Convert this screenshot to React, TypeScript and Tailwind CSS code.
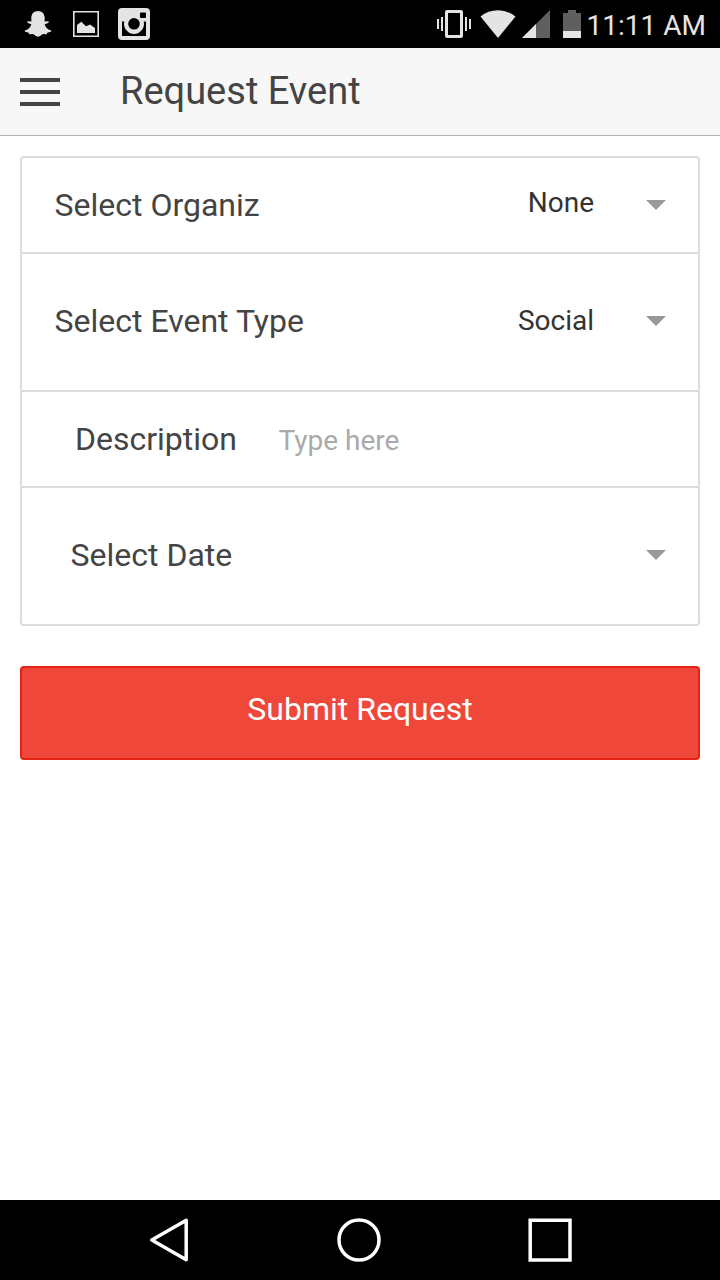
import React from "react";

const StatusBar: React.FC = () => (
  <div className="flex h-12 items-center justify-between bg-black text-[#e4e4e4]">
    <div className="flex items-center">
      <svg className="h-12 w-[150px]" viewBox="0 0 150 48" fill="currentColor">
        <path d="M38 11c4 0 6.500 2.800 6.700 6.600l-.1 4 3.400-.4c1 .3 1 1.300.1 1.700l-3.400 1.300c.6 3 2.500 5.100 6.400 6.400l.2.900-4 1.200-.6 1.500-3.800-.1c-1.500.6-2.700 2.700-4.900 2.700s-3.400-2.100-4.900-2.700l-3.800.1-.6-1.500-4-1.200.2-.9c3.900-1.300 5.800-3.400 6.400-6.400l-3.400-1.300c-.9-.4-.9-1.400.1-1.700l3.400.4-.1-4C31.500 13.800 34 11 38 11z" />
        <path
          d="M73 11h26v26H73V11zm1.600 1.600v22.800h22.800V12.600H74.600z"
          fillRule="evenodd"
        />
        <path d="M77 33v-8l4.300-3.200 4.700 4.400 4-1.800 5 3.600v5z" />
        <path
          d="M122 8h24a4 4 0 0 1 4 4v24a4 4 0 0 1-4 4h-24a4 4 0 0 1-4-4V12a4 4 0 0 1 4-4zm19 4.500a1 1 0 0 0-1 1v3.500a1 1 0 0 0 1 1h4a1 1 0 0 0 1-1v-3.500a1 1 0 0 0-1-1zM122 21.500V36h24V21.500h-2.300a10 10 0 1 1-19.400 0zM134 18a5.800 5.800 0 1 0 0 11.600a5.800 5.800 0 0 0 0-11.600z"
          fillRule="evenodd"
        />
      </svg>
    </div>
    <div className="flex items-center pr-[14px]">
      <svg className="h-12 w-[151px]" viewBox="436 0 151 48" fill="currentColor">
        {/* vibrate */}
        <path d="M437 19h2v10h-2zM441 17h2v14h-2zM465 17h2v14h-2zM469 19h2v10h-2z" />
        <path
          d="M447 10h14a2 2 0 0 1 2 2v24a2 2 0 0 1-2 2h-14a2 2 0 0 1-2-2V12a2 2 0 0 1 2-2zm1 3v22h12V13z"
          fillRule="evenodd"
        />
        {/* wifi */}
        <path d="M480.500 16.500Q488 10.200 498 10.200T515.500 16.500L498 38z" />
        {/* signal */}
        <path d="M550 10v28h-28z" fill="#5f5f5f" />
        <path d="M536 24v14h-14z" />
        {/* battery */}
        <path d="M568 10h8v3h5v18h-18V13h5z" fill="#5f5f5f" />
        <path d="M563 31h18v7h-18z" />
      </svg>
      <span className="pt-[3px] text-[28px] leading-8">11:11 AM</span>
    </div>
  </div>
);

const Header: React.FC = () => (
  <header className="flex h-[88px] items-center border-b border-[#b2b2b2] bg-[#f7f7f7] pl-5">
    <button className="mt-px flex w-10 flex-col gap-2" aria-label="Menu">
      <span className="h-1 w-full bg-[#444]" />
      <span className="h-1 w-full bg-[#444]" />
      <span className="h-1 w-full bg-[#444]" />
    </button>
    <h1 className="pb-px pl-[60px] text-[38px] leading-none text-[#444]">
      Request Event
    </h1>
  </header>
);

const Caret: React.FC = () => (
  <svg className="h-[10px] w-5" viewBox="0 0 20 10">
    <path d="M0 0h20L10 10z" fill="#999" />
  </svg>
);

const NavigationBar: React.FC = () => (
  <nav className="flex h-20 items-center bg-black pl-[148px]">
    <svg
      className="h-12 w-[426px]"
      viewBox="148 1216 426 48"
      fill="none"
      stroke="#fff"
      strokeWidth="3.500"
    >
      <path d="M186.200 1220.300v39.400L151.800 1240z" strokeLinejoin="round" />
      <circle cx="359" cy="1240" r="20" />
      <path d="M530.200 1220.200h39.800v39.800h-39.800z" />
    </svg>
  </nav>
);

export default function App() {
  return (
    <div className="flex h-[1280px] w-[720px] flex-col bg-white font-['Roboto',sans-serif]">
      <StatusBar />
      <Header />
      <main className="flex-1 p-5">
        <form>
          <div className="divide-y-2 divide-[#ddd] rounded border-2 border-[#ddd] text-[32px] leading-none text-[#444]">
            <div className="flex h-24 items-center px-8">
              <span className="flex-1 pl-[0.5px]">Select Organiz</span>
              <span className="pb-[5px] pr-[52px] text-[28px] leading-8 text-[#333]">
                None
              </span>
              <Caret />
            </div>
            <div className="flex h-[138px] items-center px-8 pb-[2px]">
              <span className="flex-1 pl-[0.5px]">Select Event Type</span>
              <span className="pb-px pr-[52px] text-[28px] leading-8 text-[#333]">
                Social
              </span>
              <Caret />
            </div>
            <div className="flex h-24 items-center pl-[53px]">
              <label htmlFor="description" className="w-[203.500px]">
                Description
              </label>
              <input
                id="description"
                type="text"
                placeholder="Type here"
                className="mt-1 w-[400px] text-[28px] leading-8 outline-none placeholder:text-[#aaa]"
              />
            </div>
            <div className="flex h-[136px] items-center pb-[2px] pl-12 pr-8">
              <span className="flex-1 pl-[0.5px]">Select Date</span>
              <Caret />
            </div>
          </div>
          <button
            type="button"
            className="mt-10 flex h-[94px] w-full items-center justify-center rounded border-2 border-[#e42112] bg-[#ef473a] pb-2 text-[32px] leading-none text-white"
          >
            Submit Request
          </button>
        </form>
      </main>
      <NavigationBar />
    </div>
  );
}
